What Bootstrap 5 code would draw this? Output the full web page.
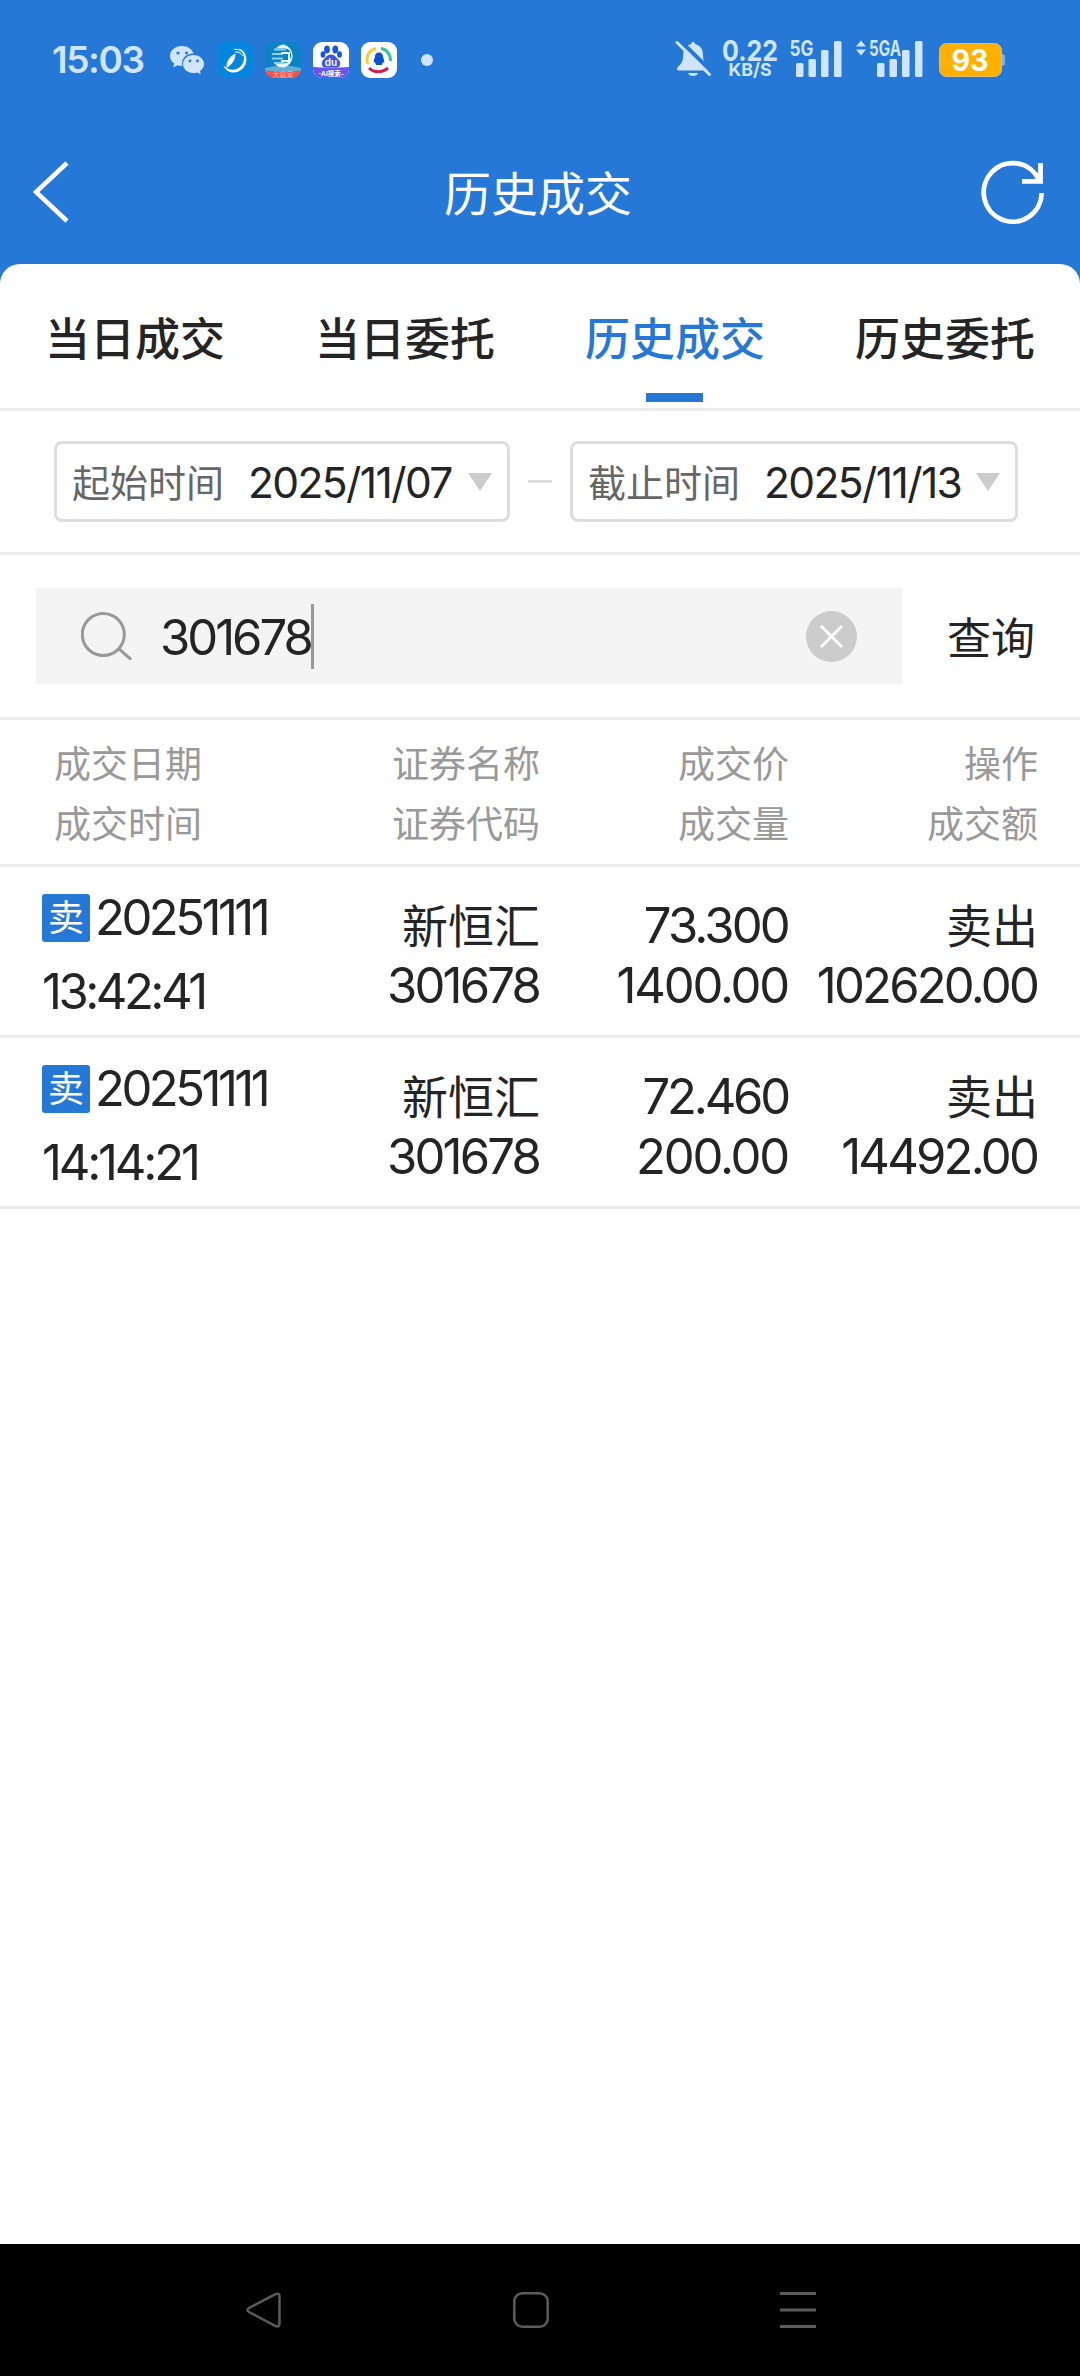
<!DOCTYPE html>
<html lang="zh-CN">
<head>
<meta charset="utf-8">
<meta name="viewport" content="width=device-width, initial-scale=1">
<title>历史成交</title>
<link href="https://cdn.jsdelivr.net/npm/bootstrap@5.3.0/dist/css/bootstrap.min.css" rel="stylesheet">
<style>
:root{--brand:#2578d5;--ink:#242424;--line:#ececec;--pale:#d0e5fc}
body{width:1080px;height:2376px;margin:0;overflow:hidden;color:var(--ink);background:#fff;font-family:Inter,"Noto Sans CJK SC",sans-serif;line-height:1}
svg{display:block;flex:none}
.topzone{background:var(--brand)}
.statusbar{height:120px;padding-left:52px;padding-right:75px;color:var(--pale)}
.clock{font-size:37px;font-weight:600;width:118px;letter-spacing:-1.4px;white-space:nowrap;padding-bottom:2px}
.wechat{margin-right:13px}
.moredot{margin-left:12px}
.appicon{width:36px;height:36px;margin-right:12px}
.titlebar{height:144px;padding:0 35px 0 33px}
.titlebar h1{font-size:47px;font-weight:400;line-height:60px;padding-top:3px}
.sheet{background:#fff;border-radius:20px 20px 0 0}
.tabrow{height:147px;border-bottom:3px solid var(--line)}
.tabrow .nav-link{font-size:45px;font-weight:500;line-height:60px;color:var(--ink);padding:46px 0 0;position:relative;border:0;border-radius:0}
.tabrow .nav-link.active{color:var(--brand)}
.tabrow .nav-link.active::after{content:"";position:absolute;left:50%;top:129px;width:57px;height:9px;margin-left:-29px;background:var(--brand)}
.daterow{height:144px;border-bottom:3px solid var(--line);padding-left:54px;padding-right:62px}
.datebox{height:81px;border:3px solid #ddd;border-radius:8px;padding:0 15px 0 15px;color:var(--ink)}
.datebox-from{width:456px}.datebox-to{width:448px}
.datelabel{font-size:38px;color:#666;width:176px;line-height:54px;padding-top:3px}
.dateval{font-size:42.5px;letter-spacing:-1.6px;padding-top:3px}
.dash{width:24px;height:3px;background:#ddd}
.searchrow{height:165px;border-bottom:3px solid var(--line);padding-left:36px}
.searchbox{width:866px;height:96px;background:#f4f4f4;padding:0 45px}
.searchtext{font-size:49px;letter-spacing:-3px;padding-top:3px}
.caret{width:3px;height:65px;background:#999}
.querybtn{font-size:44px;line-height:60px;width:178px;color:var(--ink)}
.searchrow .querybtn{padding-top:5px!important}
.gridrow{border-bottom:3px solid var(--line);display:grid;grid-template-columns:300px 240px 249px 249px;padding-right:42px;line-height:60px;text-align:right}
.headrow{height:147px;font-size:37px;color:#999;padding-top:15px}
.headrow>:first-child{text-align:left;padding-left:54px}
.dealrow{height:171px;font-size:49px;letter-spacing:-2.8px;padding-top:29px;padding-right:43px;grid-template-columns:300px 239px 249px 249px;white-space:nowrap}
.dealrow .zh{font-size:46px;letter-spacing:0;margin-right:-1px}
.dealrow .when{text-align:left;padding-left:42px;margin-top:-15px}
.when>div{height:73px;margin-bottom:8px}
.snug-1{letter-spacing:-2.2px}
.snug-3{letter-spacing:-3.2px}
.snug-4{letter-spacing:-3.5px}
.sellmark{width:48px;height:48px;border-radius:3px;background:var(--brand);color:#fff;font-size:36px;line-height:48px;letter-spacing:0;text-align:center;margin-right:5px}
.blank{height:1035px}
.navbarkeys{height:132px;background:#000;padding:48px 264px 0 246px}
</style>
</head>
<body>
<header class="topzone">
  <div class="statusbar d-flex align-items-center">
    <span class="clock">15:03</span>
    <svg class="wechat" width="34" height="30" viewBox="0 0 34 30"><path fill="#d0e5fc" d="M12 1C5 1 0 5.500 0 11c0 3.200 1.600 5.800 4.200 7.600L3 22.500l4.500-2.300c1.800.5 3 .7 5 .6C10.500 14 16 8.500 23.500 8.500 22.200 4 17.500 1 12 1z"/><path fill="#d0e5fc" d="M23.500 10C17.500 10 13 14 13 19s4.500 9 10.500 9c1.400 0 2.500-.2 3.700-.6l3.600 1.900-1-3.100C32.400 24.500 34 22 34 19c0-5-4.500-9-10.500-9z"/><g fill="#2578d5"><circle cx="8" cy="8" r="1.600"/><circle cx="16.500" cy="8" r="1.600"/><circle cx="20" cy="16" r="1.400"/><circle cx="27.500" cy="16" r="1.400"/></g></svg>
    <svg class="appicon" viewBox="0 0 36 36"><rect width="36" height="36" rx="9" fill="#0586de"/><path fill="#fff" d="M6.500 23.500C9 31 18 32.500 24 28c6-4.500 7-12 3-18-1.500-2-3.500-3-5-3.300 3 2 5 5 5 9.300 0 9-11 17-20.500 7.500z"/><path fill="none" stroke="#fff" stroke-width="1" d="M17 7.500c5-1 9 2 10.500 6M18 10c4-.5 6.500 1.500 8 4"/><path fill="#fff" d="M18.500 11.500c-6 3-9.500 8-9 14.500 5.500-3.500 9-8 9-14.500z"/></svg>
    <svg class="appicon" viewBox="0 0 36 36"><defs><clipPath id="r2"><rect width="36" height="36" rx="9"/></clipPath></defs><g clip-path="url(#r2)"><path fill="#0b83c6" d="M0 0h36v36H0z"/><path fill="#5fb0d5" d="M0 26q18-5 36 0v4H0z"/><path fill="#ee5350" d="M0 28.500q18 2 36 0V36H0z"/><path fill="#e8f8fc" d="M19 2.500a12 12 0 0 1 0 23c-4 0-7-1-9-4h7c6 0 9-3 9-8 0-4-2-7-6-7h-9c2-2.500 5-4 8-4z"/><path stroke="#8ed0e8" stroke-width="2" d="M9 7.500h12M7 12h11M7 16.500h11M9 21h10"/><path fill="none" stroke="#e8f8fc" stroke-width="2" d="M16 11h8v8h-8"/></g><text x="18" y="34.700" text-anchor="middle" font-size="7" fill="#ffb9ae">大赢家</text></svg>
    <svg class="appicon" viewBox="0 0 36 36"><defs><clipPath id="r3"><rect width="36" height="36" rx="9"/></clipPath></defs><g clip-path="url(#r3)"><path fill="#fff" d="M0 0h36v36H0z"/><g fill="#1457d8"><ellipse cx="14" cy="7.500" rx="2.900" ry="4"/><ellipse cx="22.300" cy="7.500" rx="2.900" ry="4"/><ellipse cx="10" cy="12.500" rx="2.400" ry="3.300"/><ellipse cx="26.500" cy="12.500" rx="2.400" ry="3.300"/></g><path fill="#3a57e4" d="M18 12.500c4 0 5 3 7.500 5 3 3 2 8-2 8h-11c-4 0-5-5-2-8C13 15.500 14 12.500 18 12.500z"/><path fill="#6a52ee" d="M0 25q18 1.500 36 0v11H0z"/></g><text x="18" y="23.500" text-anchor="middle" font-size="10" font-weight="600" fill="#fff">du</text><text x="18" y="33.700" text-anchor="middle" font-size="6.500" font-weight="700" fill="#fff">-AI搜索-</text></svg>
    <svg class="appicon" viewBox="0 0 36 36"><rect width="36" height="36" rx="9" fill="#fff"/><g fill="none" stroke-width="3"><path stroke="#f5cd35" d="M7 22C4 15 8 8 15 6.500"/><path stroke="#36c39a" d="M20 6.200c6 1.300 9.500 6 9.500 12.800"/><path stroke="#d31b52" d="M8 26c5 5 13 5 19 0"/></g><path fill="#0c52cc" d="M18 10.500c-3.300 0-4.200 2.700-4.200 5-1 2-1.300 4-.8 5.300l1.200-.8c0 1.500.5 2.200 1 3h5.600c.5-.8 1-1.500 1-3l1.200.8c.5-1.300.2-3.300-.8-5.300 0-2.300-.9-5-4.200-5z"/></svg>
    <svg class="moredot" width="12" height="12"><circle cx="6" cy="6" r="6" fill="#d0e5fc"/></svg>
    <svg class="ms-auto" width="330" height="80" viewBox="675 20 330 80" fill="#d0e5fc">
      <path d="M693 42c1.500 0 2 1 2 2 6 1.500 8 6 8 11 0 8 3 9 6 13 .8 2-.5 2.500-2 2.500h-28c-2 0-2.600-1-1.800-2.500 3-4 6-5 6-13 0-5 2-9.500 8-11 0-1 .5-2 1.800-2zM688 73h10c-1 4-9 4-10 0z"/><path d="M679 39.500L711.500 71.500" stroke="#2578d5" stroke-width="4"/><path d="M677 42.500L709.500 74.500" stroke="#d0e5fc" stroke-width="3" stroke-linecap="round"/>
      <text x="722" y="60.500" font-size="28.500" font-weight="700" textLength="56" lengthAdjust="spacingAndGlyphs">0.22</text>
      <text x="728.500" y="76" font-size="18" font-weight="700" textLength="43" lengthAdjust="spacingAndGlyphs">KB/S</text>
      <text x="789.500" y="56" font-size="21" font-weight="700" textLength="24" lengthAdjust="spacingAndGlyphs">5G</text>
      <rect x="796" y="63" width="7.500" height="14" rx="1.500"/><rect x="808.500" y="59" width="7.500" height="18" rx="1.500"/><rect x="821" y="50" width="7.500" height="27" rx="1.500"/><rect x="834" y="41" width="7.500" height="36" rx="1.500"/>
      <path d="M856 46.500l5-6 5 6zM856 49.500l5 6 5-6z"/>
      <text x="869" y="56" font-size="21" font-weight="700" textLength="32" lengthAdjust="spacingAndGlyphs">5GA</text>
      <rect x="877" y="63" width="7.500" height="14" rx="1.500"/><rect x="889.500" y="59" width="7.500" height="18" rx="1.500"/><rect x="902" y="50" width="7.500" height="27" rx="1.500"/><rect x="915" y="41" width="7.500" height="36" rx="1.500"/>
      <path d="M1002 54q3 0 3 3v6q0 3-3 3z" fill="#7fb0e8"/><rect x="939.500" y="43.500" width="62" height="33" rx="7" fill="#ffb000" stroke="#d9bf7a"/>
      <text x="951.500" y="71" font-size="30" font-weight="700" fill="#fff" textLength="37" lengthAdjust="spacingAndGlyphs">93</text>
    </svg>
  </div>
  <div class="titlebar d-flex align-items-center justify-content-between">
    <svg width="62" height="62" viewBox="0 0 62 62" fill="none" stroke="#fff" stroke-width="4.500"><path d="M34 2L3 31l31 29"/></svg>
    <h1 class="m-0 text-white">历史成交</h1>
    <svg width="64" height="64" viewBox="982 161 64 64" fill="none" stroke="#fff" stroke-width="4.800"><path d="M1042.700 194A29 29.300 0 1 1 1040 181"/><path d="M1041.500 164v18.300h-18.500"/></svg>
  </div>
  <nav class="sheet tabrow nav nav-justified flex-nowrap align-items-start">
    <a class="nav-link">当日成交</a><a class="nav-link">当日委托</a><a class="nav-link active">历史成交</a><a class="nav-link">历史委托</a>
  </nav>
</header>
<main>
  <section class="daterow d-flex align-items-center justify-content-between">
    <div class="datebox datebox-from d-flex align-items-center"><span class="datelabel">起始时间</span><span class="dateval">2025/11/07</span><svg class="ms-auto" width="24" height="18"><path d="M0 0h24L12 18z" fill="#ccc"/></svg></div>
    <span class="dash"></span>
    <div class="datebox datebox-to d-flex align-items-center"><span class="datelabel">截止时间</span><span class="dateval">2025/11/13</span><svg class="ms-auto" width="24" height="18"><path d="M0 0h24L12 18z" fill="#ccc"/></svg></div>
  </section>
  <section class="searchrow d-flex align-items-center">
    <div class="searchbox d-flex align-items-center">
      <svg width="51" height="48" class="me-4" fill="none" stroke="#999" stroke-width="3"><circle cx="22.300" cy="22.500" r="21"/><path d="M38 37l12 10.500"/></svg>
      <span class="searchtext ps-1">301678</span><span class="caret"></span>
      <svg class="ms-auto" width="51" height="51"><circle cx="25.500" cy="25.500" r="25.500" fill="#ccc"/><path d="M15 15l21 21M36 15L15 36" stroke="#fff" stroke-width="2.800"/></svg>
    </div>
    <button class="btn p-0 border-0 querybtn">查询</button>
  </section>
  <section>
    <div class="gridrow headrow"><div>成交日期<br>成交时间</div><div>证券名称<br>证券代码</div><div>成交价<br>成交量</div><div>操作<br>成交额</div></div>
    <div class="gridrow dealrow">
      <div class="when"><div class="d-flex align-items-center"><span class="sellmark">卖</span><span class="snug-4">20251111</span></div><span class="snug-4">13:42:41</span></div>
      <div><div class="zh">新恒汇</div><span>301678</span></div>
      <div><span>73.300</span><br><span class="snug-1">1400.00</span></div>
      <div><div class="zh">卖出</div><span>102620.00</span></div>
    </div>
    <div class="gridrow dealrow">
      <div class="when"><div class="d-flex align-items-center"><span class="sellmark">卖</span><span class="snug-4">20251111</span></div><span class="snug-3">14:14:21</span></div>
      <div><div class="zh">新恒汇</div><span>301678</span></div>
      <div><span class="snug-3">72.460</span><br><span class="snug-1">200.00</span></div>
      <div><div class="zh">卖出</div><span>14492.00</span></div>
    </div>
  </section>
  <div class="blank"></div>
</main>
<footer class="navbarkeys d-flex justify-content-between">
  <svg width="36" height="36" fill="none" stroke="#5c5c5c" stroke-width="2.500"><path d="M29.500 2.200L3 16q-3 2 0 4l26.500 14q4 1.500 4-2.500v-27q0-4-4-2.300z"/></svg>
  <svg width="36" height="36" fill="none" stroke="#5c5c5c" stroke-width="2.500"><rect x="1.300" y="1.300" width="33.400" height="33.400" rx="8"/></svg>
  <svg width="36" height="36"><path d="M0 1.500h36M0 18h36M0 34.500h36" stroke="#5c5c5c" stroke-width="3"/></svg>
</footer>
<script src="https://cdn.jsdelivr.net/npm/bootstrap@5.3.0/dist/js/bootstrap.bundle.min.js"></script>
</body>
</html>
